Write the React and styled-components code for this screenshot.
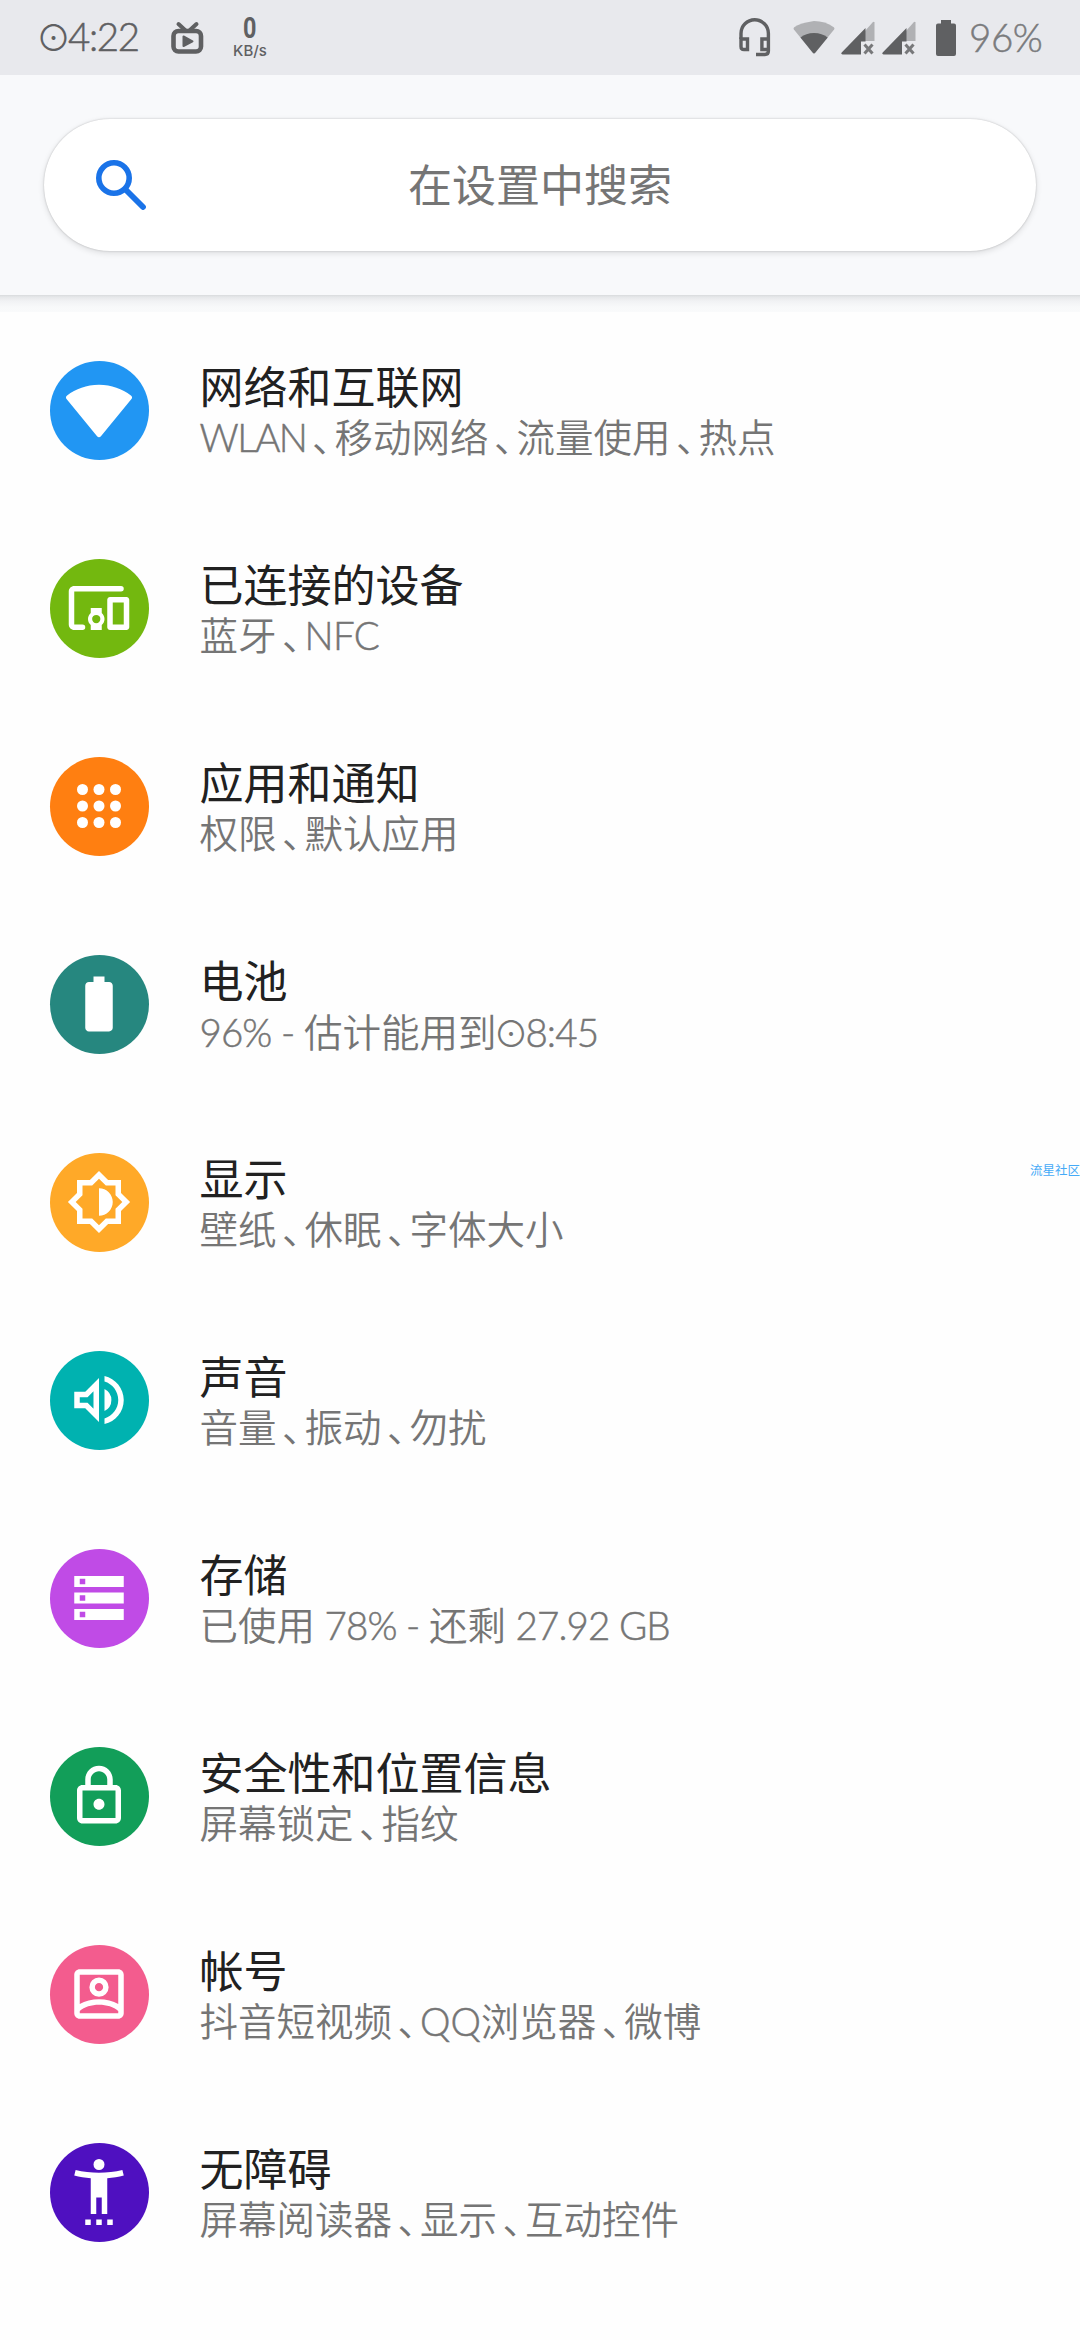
import { Fragment } from 'react';
import styled, { createGlobalStyle } from 'styled-components';

const GlobalStyle = createGlobalStyle`
  * {
    box-sizing: border-box;
  }

  body {
    margin: 0;
    background: #fefefe;
    font-family: Lato, 'Noto Sans CJK SC', sans-serif;
  }
`;

const Screen = styled.div`
  position: relative;
  width: 1080px;
  height: 2340px;
  overflow: hidden;
  background: #fefefe;
`;

// Status bar
const StatusBar = styled.header`
  display: flex;
  align-items: center;
  height: 75px;
  padding: 0 39px;
  background: #e8e9ed;
  color: #5f6062;
`;

const StatusIcon = styled.svg`
  flex: none;
  display: block;
  width: ${({ $w }) => $w}px;
  height: ${({ $h }) => $h}px;
  margin-left: ${({ $gap }) => $gap || 0}px;
`;

const Clock = styled.div`
  width: 99px;
  height: 75px;
  font-size: 38.5px;
  font-weight: 300;
  line-height: 72px;
  letter-spacing: -1.4px;
  white-space: nowrap;
  -webkit-text-stroke: 0.5px;
`;

const NetSpeed = styled.div`
  display: flex;
  flex-direction: column;
  align-items: center;
  width: 34px;
  margin-left: 29px;
  font-family: Roboto, sans-serif;
`;

const SpeedValue = styled.span`
  font-size: 30px;
  font-weight: 700;
  line-height: 26px;
  transform: scaleX(0.78);
`;

const SpeedUnit = styled.span`
  font-family: Inter, sans-serif;
  font-size: 15px;
  font-weight: 500;
  line-height: 20px;
`;

const StatusRight = styled.div`
  display: flex;
  align-items: center;
  margin-left: auto;
`;

const Percent = styled.div`
  width: 72px;
  height: 75px;
  margin-left: 13px;
  color: #7a7b7d;
  font-size: 38.5px;
  font-weight: 300;
  line-height: 74px;
  letter-spacing: -0.4px;
  white-space: nowrap;
  -webkit-text-stroke: 0.5px;
`;

// Search
const SearchArea = styled.div`
  height: 220px;
  padding: 44px;
  background: #f8f9fb;
`;

const SearchBox = styled.div`
  display: grid;
  grid-template-columns: 102px 1fr 102px;
  align-items: center;
  height: 132px;
  border-radius: 66px;
  background: #fff;
  box-shadow: 0 0 2px rgba(0, 0, 0, 0.22), 0 2px 6px rgba(0, 0, 0, 0.12);
`;

const SearchIcon = styled.svg`
  width: 50px;
  height: 50px;
  margin-left: 52px;
`;

const SearchText = styled.div`
  color: #757575;
  font-size: 44px;
  line-height: 60px;
  text-align: center;
`;

const HeaderShadow = styled.div`
  height: 17px;
  background: linear-gradient(#d9dbdd 0, #e6e8ea 2px, #f1f2f4 6px, #f8f9fa 12px, #f9fafb 17px);
`;

// Settings list
const List = styled.main`
  display: flex;
  flex-direction: column;
  margin-top: -1px;
`;

const Row = styled.div`
  display: flex;
  align-items: center;
  height: 198px;
  padding-left: 50px;
`;

const Badge = styled.div`
  display: flex;
  flex: none;
  align-items: center;
  justify-content: center;
  width: 99px;
  height: 99px;
  padding: 0 1px 1px 0;
  border-radius: 50%;
  background: ${({ $color }) => $color};
`;

const Glyph = styled.svg`
  width: 66px;
  height: 66px;
  fill: #fff;
`;

const Texts = styled.div`
  margin-left: 50.5px;
  padding-top: 3px;
  white-space: nowrap;
`;

const Title = styled.div`
  color: #212121;
  font-size: 44px;
  line-height: 52px;
`;

const Summary = styled.div`
  color: #757575;
  font-size: 38.5px;
  font-weight: 350;
  line-height: 49px;
`;

const Comma = styled.span`
  display: inline-block;
  width: 28px;
  padding-left: 5.5px;
  font-feature-settings: 'halt';
`;

const Latin = styled.span`
  letter-spacing: ${({ $track }) => $track}px;
  -webkit-text-stroke: 0.5px;
`;

const Zero = styled.span`
  display: inline-block;
  width: 29px;
  font-family: 'Noto Sans CJK SC', sans-serif;
  font-size: 35px;
  font-weight: 350;
  letter-spacing: 0;
  text-indent: -3px;
  -webkit-text-stroke: 0;
`;

const Watermark = styled.div`
  position: absolute;
  top: 1162px;
  right: 0;
  color: #45aaf7;
  font-size: 12.5px;
  line-height: 18px;
`;

const rows = [
  {
    title: '网络和互联网',
    summary: 'WLAN、移动网络、流量使用、热点',
    track: -1.5,
    color: '#2196f3',
    icon: <path d="M12 2.8c4.6 0 8.400 1.500 11.600 3.900.5.4.5.9.2 1.300L12.700 21.500c-.4.5-1 .5-1.400 0L.2 8c-.3-.4-.3-.9.2-1.300C3.600 4.300 7.400 2.800 12 2.800z" />,
  },
  {
    title: '已连接的设备',
    summary: '蓝牙、NFC',
    track: -0.7,
    color: '#73b80f',
    icon: (
      <path
        fillRule="evenodd"
        d="M3 6h17a1 1 0 0 0 0-2H3c-1.100 0-2 .9-2 2v12c0 1.100.9 2 2 2h3a1 1 0 0 0 0-2H3V6zm10 6H9v1.780c-.61.55-1 1.330-1 2.220s.39 1.670 1 2.220V20h4v-1.780c.61-.55 1-1.340 1-2.220s-.39-1.670-1-2.220V12zm-2 5.500a1.500 1.500 0 1 1 0-3 1.500 1.500 0 0 1 0 3zM22 8h-6c-.5 0-1 .5-1 1v10c0 .5.5 1 1 1h6c.5 0 1-.5 1-1V9c0-.5-.5-1-1-1zm-1 10h-4v-8h4v8z"
      />
    ),
  },
  {
    title: '应用和通知',
    summary: '权限、默认应用',
    color: '#ff7f11',
    icon: [6, 12, 18].map((y) => [6, 12, 18].map((x) => <circle key={`${x}-${y}`} cx={x} cy={y} r="2" />)),
  },
  {
    title: '电池',
    summary: '96% - 估计能用到⊙8:45',
    track: -0.9,
    color: '#26877f',
    icon: <path d="M15.670 4H14V2h-4v2H8.330C7.600 4 7 4.600 7 5.330v15.330C7 21.400 7.600 22 8.330 22h7.330c.74 0 1.340-.6 1.340-1.330V5.330C17 4.600 16.400 4 15.670 4z" />,
  },
  {
    title: '显示',
    summary: '壁纸、休眠、字体大小',
    color: '#ffa928',
    icon: (
      <path
        fillRule="evenodd"
        d="M20 8.690V4h-4.690L12 .69 8.690 4H4v4.690L.69 12 4 15.310V20h4.690L12 23.310 15.310 20H20v-4.690L23.310 12 20 8.690zm-2 5.790V18h-3.520L12 20.480 9.520 18H6v-3.520L3.520 12 6 9.520V6h3.520L12 3.520 14.480 6H18v3.520L20.480 12 18 14.480zM12 7v10c2.760 0 5-2.240 5-5s-2.240-5-5-5z"
      />
    ),
  },
  {
    title: '声音',
    summary: '音量、振动、勿扰',
    color: '#00b2b0',
    icon: (
      <path
        fillRule="evenodd"
        d="M3 9v6h4l5 5V4L7 9H3zm7-.17v6.340L7.830 13H5v-2h2.830L10 8.830zM16.500 12A4.500 4.500 0 0 0 14 7.970v8.050A4.470 4.470 0 0 0 16.500 12zM14 3.230v2.060c2.890.86 5 3.540 5 6.710s-2.110 5.850-5 6.710v2.060c4.010-.91 7-4.490 7-8.770s-2.990-7.860-7-8.770z"
      />
    ),
  },
  {
    title: '存储',
    summary: '已使用 78% - 还剩 27.92 GB',
    track: -0.9,
    color: '#c04be6',
    icon: <path fillRule="evenodd" d="M3 20h18v-4H3v4zm2-3h2v2H5v-2zM3 4v4h18V4H3zm4 3H5V5h2v2zm-4 7h18v-4H3v4zm2-3h2v2H5v-2z" />,
  },
  {
    title: '安全性和位置信息',
    summary: '屏幕锁定、指纹',
    color: '#129e59',
    icon: (
      <path
        fillRule="evenodd"
        d="M18 8h-1V6c0-2.760-2.240-5-5-5S7 3.240 7 6v2H6c-1.100 0-2 .9-2 2v10c0 1.100.9 2 2 2h12c1.100 0 2-.9 2-2V10c0-1.100-.9-2-2-2zM9 6c0-1.660 1.340-3 3-3s3 1.340 3 3v2H9V6zm9 14H6V10h12v10zm-6-3c1.100 0 2-.9 2-2s-.9-2-2-2-2 .9-2 2 .9 2 2 2z"
      />
    ),
  },
  {
    title: '帐号',
    summary: '抖音短视频、QQ浏览器、微博',
    track: -0.1,
    color: '#f35c8e',
    icon: (
      <path
        fillRule="evenodd"
        d="M19 3H5c-1.100 0-2 .9-2 2v14c0 1.100.9 2 2 2h14c1.100 0 2-.9 2-2V5c0-1.100-.9-2-2-2zM5 5h14v10.600C17.100 14.500 14.600 13.900 12 13.900S6.900 14.500 5 15.600V5zm0 14v-.8C6.700 16.700 9.200 15.900 12 15.900s5.300.8 7 2.300v.8H5zM12 6a3.500 3.500 0 1 0 0 7 3.500 3.500 0 0 0 0-7zm0 5a1.500 1.500 0 1 1 0-3 1.500 1.500 0 0 1 0 3z"
      />
    ),
  },
  {
    title: '无障碍',
    summary: '屏幕阅读器、显示、互动控件',
    color: '#4f10c0',
    icon: (
      <path d="M20.500 4c-2.610.7-5.670 1-8.500 1s-5.890-.3-8.500-1L3 6c1.860.5 4 .83 6 1v13h2v-6h2v6h2V7c2-.17 4.140-.5 6-1l-.5-2zM12 4a2 2 0 1 0 0-4 2 2 0 0 0 0 4zM7 24h2v-2H7v2zm4 0h2v-2h-2v2zm4 0h2v-2h-2v2z" />
    ),
  },
];

// splits a summary so the comma, the dotted zero and latin runs get their own widths
function renderSummary(text, track = -1) {
  return text.split(/(、|⊙|[\x20-\x7e]+)/).map((part, i) => {
    if (part === '、') return <Comma key={i}>、</Comma>;
    if (part === '⊙') return <Zero key={i}>⊙</Zero>;
    if (/^[\x20-\x7e]+$/.test(part)) return <Latin key={i} $track={track}>{part}</Latin>;
    return <Fragment key={i}>{part}</Fragment>;
  });
}

function SignalIcon({ gap }) {
  return (
    <StatusIcon $w={34} $h={34} $gap={gap} viewBox="0 0 34 34">
      <path d="M24 10 31.500 1.500q1.500-1.500 2 0V20H24z" fill="#b0b1b4" />
      <path d="M24.500 7V20.500H20V33.500H1.500q-2-.5-.8-2z" fill="#5f6062" />
      <path d="M23.500 23.500l8 9M31.500 23.500l-8 9" stroke="#77787a" strokeWidth="3" />
    </StatusIcon>
  );
}

function SettingsRow({ title, summary, track, color, icon }) {
  return (
    <Row>
      <Badge $color={color}>
        <Glyph viewBox="0 0 24 24">{icon}</Glyph>
      </Badge>
      <Texts>
        <Title>{title}</Title>
        <Summary>{renderSummary(summary, track)}</Summary>
      </Texts>
    </Row>
  );
}

export default function App() {
  return (
    <Screen>
      <GlobalStyle />
      <StatusBar>
        <Clock>
          <Zero>⊙</Zero>4:22
        </Clock>
        <StatusIcon $w={33} $h={34} $gap={33} viewBox="0 0 33 34" fill="none" stroke="#5f6062">
          <rect x="2.500" y="10" width="27.500" height="20.500" rx="5" strokeWidth="4.600" />
          <path d="M7.500 3l7 6.500M25.500 3l-7 6.500" strokeWidth="4" strokeLinecap="round" />
          <path d="M12.500 15.500v9.500l9-4.700z" fill="#5f6062" strokeWidth="2" strokeLinejoin="round" />
        </StatusIcon>
        <NetSpeed>
          <SpeedValue>0</SpeedValue>
          <SpeedUnit>KB/s</SpeedUnit>
        </NetSpeed>
        <StatusRight>
          <StatusIcon $w={32} $h={39} viewBox="0 0 32 39" fill="none" stroke="#5f6062" strokeWidth="3.400">
            <path d="M2 21V15.500a13.700 13.700 0 0 1 27.400 0V33q0 3.500-3.500 3.500H17" />
            <path d="M2 21h6.500v10.500H5q-3 0-3-3zM29.400 21h-6.500v10.500h6.500" />
          </StatusIcon>
          <StatusIcon $w={42} $h={33} $gap={22} viewBox="0 0 42 33">
            <path d="M21 0c7.500 0 14 2 19.800 6.200q1.200 1 .3 2.200L22.200 31.800q-1.200 1.200-2.400 0L.9 8.400Q0 7.200 1.200 6.200 7 2 21 0z" fill="#b0b1b4" />
            <path d="M21 12c5.500 0 9.800 1.600 13.700 4.600L22.200 31.800q-1.200 1.200-2.400 0L7.500 16.600C11.200 13.600 15.500 12 21 12z" fill="#5f6062" />
          </StatusIcon>
          <SignalIcon gap={6} />
          <SignalIcon gap={7} />
          <StatusIcon $w={20} $h={36} $gap={20} viewBox="0 0 20 36">
            <path d="M5 0h10v3.500h3q2 0 2 2V34q0 2-2 2H2q-2 0-2-2V5.500q0-2 2-2h3z" fill="#5f6062" />
          </StatusIcon>
          <Percent>96%</Percent>
        </StatusRight>
      </StatusBar>

      <SearchArea>
        <SearchBox>
          <SearchIcon viewBox="0 0 50 50" fill="none" stroke="#1a73e8">
            <circle cx="18" cy="18" r="15.200" strokeWidth="5.600" />
            <path d="M30 30l17 17" strokeWidth="5.800" strokeLinecap="round" />
          </SearchIcon>
          <SearchText>在设置中搜索</SearchText>
        </SearchBox>
      </SearchArea>
      <HeaderShadow />

      <List>
        {rows.map((row) => (
          <SettingsRow key={row.title} {...row} />
        ))}
      </List>

      <Watermark>流星社区</Watermark>
    </Screen>
  );
}
